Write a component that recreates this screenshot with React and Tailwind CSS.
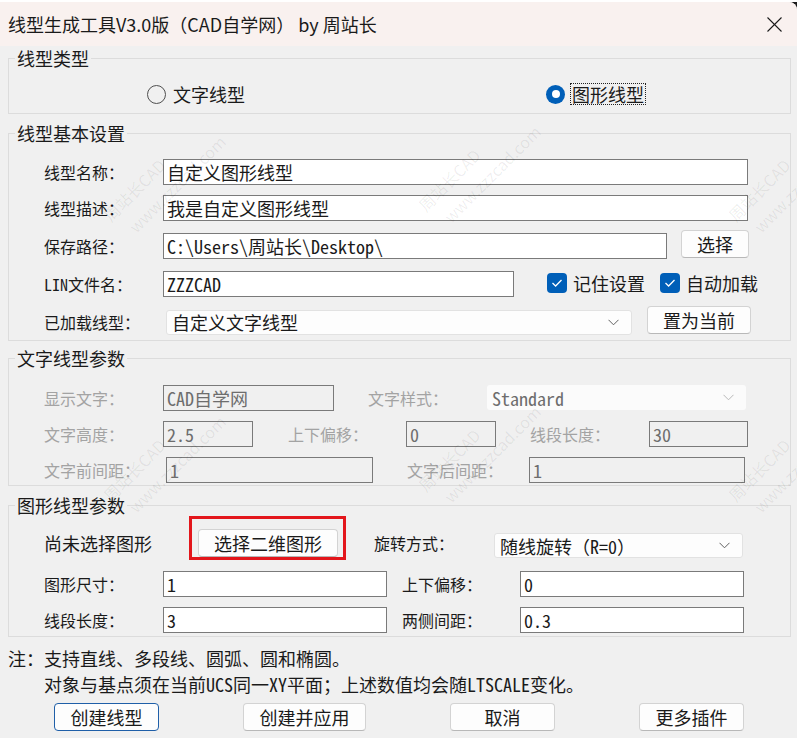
import React from 'react';

const ui = "font-['Noto_Sans_CJK_SC',sans-serif]";

// half-width Latin, like the dialog's bitmap font
function H({ children }) {
  return <span className="[font-feature-settings:'hwid']">{children}</span>;
}

function Group({ title, className = '', children }) {
  return (
    <fieldset className={`border border-[#dcdcdc] ${className}`}>
      <legend className="ml-[6px] px-[2px] text-[18px] leading-[22px] text-[#1a1a1a]">{title}</legend>
      {children}
    </fieldset>
  );
}

function Label({ children, w, className = '', disabled }) {
  return (
    <span className={`shrink-0 text-[16px] leading-[22px] whitespace-nowrap ${disabled ? 'text-[#a3a3a3]' : 'text-[#1a1a1a]'} ${w} ${className}`}>
      {children}
    </span>
  );
}

function Field({ value, w, disabled, className = '' }) {
  return (
    <input
      readOnly
      disabled={disabled}
      value={value}
      className={`h-[26px] shrink-0 border border-[#7a7a7a] pl-[3px] text-[18px] outline-none [font-feature-settings:'hwid'] ${disabled ? 'bg-[#f0f0f0] text-[#6d6d6d]' : 'bg-white text-[#1a1a1a]'} ${w} ${className}`}
    />
  );
}

function Chevron({ color = '#606060' }) {
  return (
    <svg width="11" height="7" viewBox="0 0 11 7" fill="none">
      <polyline points="0.5,0.8 5.5,5.8 10.5,0.8" stroke={color} strokeWidth="1" />
    </svg>
  );
}

function Combo({ children, w, disabled, className = '' }) {
  return (
    <div className={`flex h-[25px] shrink-0 items-center justify-between rounded-[3px] pl-[5px] pr-[12px] text-[18px] ${disabled ? 'bg-[#fbfbfb] text-[#6d6d6d]' : 'border border-[#e2e2e2] bg-[#fdfdfd] text-[#1a1a1a]'} ${w} ${className}`}>
      <span className="leading-[22px]">{children}</span>
      <Chevron color={disabled ? '#b8b8b8' : '#606060'} />
    </div>
  );
}

function Button({ children, w, focused, className = '' }) {
  return (
    <button
      className={`h-[28px] shrink-0 rounded-[4px] border bg-[#fdfdfd] text-[18px] leading-[22px] text-[#1a1a1a] ${focused ? 'border-[#1f5fa8]' : 'border-[#d3d3d3] border-b-[#b8b8b8]'} ${w} ${className}`}
    >
      {children}
    </button>
  );
}

function Check({ label, className = '' }) {
  return (
    <label className={`flex items-center ${className}`}>
      <span className="flex h-[20px] w-[20px] items-center justify-center rounded-[4px] bg-[#005fb8]">
        <svg width="12" height="10" viewBox="0 0 12 10" fill="none">
          <polyline points="1.5,5 4.6,8 10.5,2" stroke="white" strokeWidth="1.3" />
        </svg>
      </span>
      <span className="ml-[6px] text-[18px] leading-[22px] text-[#1a1a1a]">{label}</span>
    </label>
  );
}

function Radio({ label, checked }) {
  return (
    <label className="flex items-center">
      {checked ? (
        <span className="flex h-[19px] w-[19px] items-center justify-center rounded-full bg-[#005fb8]">
          <span className="h-[8px] w-[8px] rounded-full bg-white" />
        </span>
      ) : (
        <span className="h-[19px] w-[19px] rounded-full border border-[#4f4f4f]" />
      )}
      <span className={`ml-[5px] text-[18px] leading-[20px] text-[#1a1a1a] ${checked ? 'border border-dotted border-[#202020] px-[1px]' : 'px-[2px]'}`}>
        {label}
      </span>
    </label>
  );
}

// faint diagonal site marks across the dialog
const marks = [
  { left: 95, top: 150 },
  { left: 410, top: 140 },
  { left: 720, top: 150 },
  { left: 95, top: 430 },
  { left: 410, top: 420 },
  { left: 720, top: 430 },
];

function Watermarks() {
  return (
    <div className="pointer-events-none absolute inset-0 overflow-hidden">
      {marks.map((m, i) => (
        <div
          key={i}
          className="absolute flex -rotate-45 flex-col text-[16px] leading-[26px] text-[#000000]/[0.07]"
          style={{ left: m.left, top: m.top }}
        >
          <span className="whitespace-nowrap">周站长CAD</span>
          <span className="ml-[10px] whitespace-nowrap">www.zzzcad.com</span>
        </div>
      ))}
    </div>
  );
}

export default function App() {
  return (
    <div className={`h-[738px] w-[797px] bg-[#1c1c1c] ${ui}`}>
      <div className="relative mt-[2px] h-[736px] overflow-hidden rounded-tr-[8px] bg-[#f0f0f0]">
        {/* title bar */}
        <div className="flex h-[44px] items-center justify-between bg-[#f9f1ef] pl-[8px] pr-[15px]">
          <span className="text-[18px] leading-[24px] text-[#1a1a1a]">
            线型生成工具V3.0版（CAD自学网） by 周站长
          </span>
          <svg width="15" height="15" viewBox="0 0 15 15" fill="none">
            <line x1="0.5" y1="0.5" x2="14.5" y2="14.5" stroke="#1a1a1a" strokeWidth="1.1" />
            <line x1="14.5" y1="0.5" x2="0.5" y2="14.5" stroke="#1a1a1a" strokeWidth="1.1" />
          </svg>
        </div>

        <div className="pl-[8px] pr-[6px]">
          <Group title="线型类型" className="mt-[1px] h-[67px]">
            <div className="mt-[13px] flex h-[24px] items-center gap-[299px] pl-[138px]">
              <Radio label="文字线型" />
              <Radio label="图形线型" checked />
            </div>
          </Group>

          <Group title="线型基本设置" className="mt-[8px] h-[219px]">
            <div className="flex flex-col pl-[35px]">
              <div className="mt-[15px] flex h-[26px] items-center">
                <Label w="w-[119px]">线型名称：</Label>
                <Field value="自定义图形线型" w="w-[585px]" />
              </div>
              <div className="mt-[10px] flex h-[26px] items-center">
                <Label w="w-[119px]">线型描述：</Label>
                <Field value="我是自定义图形线型" w="w-[585px]" />
              </div>
              <div className="mt-[12px] flex h-[26px] items-center">
                <Label w="w-[119px]">保存路径：</Label>
                <Field value="C:\Users\周站长\Desktop\" w="w-[504px]" />
                <Button w="w-[68px]" className="mb-[5px] ml-[14px] h-[27px]">选择</Button>
              </div>
              <div className="mt-[12px] flex h-[26px] items-center">
                <Label w="w-[119px]"><H>LIN</H>文件名：</Label>
                <Field value="ZZZCAD" w="w-[351px]" />
                <Check label="记住设置" className="mb-[2px] ml-[33px]" />
                <Check label="自动加载" className="mb-[2px] ml-[15px]" />
              </div>
              <div className="mt-[12px] flex h-[26px] items-center">
                <Label w="w-[122px]">已加载线型：</Label>
                <Combo w="w-[466px]">自定义文字线型</Combo>
                <Button w="w-[104px]" className="mb-[4px] ml-[15px]">置为当前</Button>
              </div>
            </div>
          </Group>

          <Group title="文字线型参数" className="mt-[6px] h-[139px]">
            <div className="flex flex-col pl-[35px]">
              <div className="mt-[16px] flex h-[26px] items-center">
                <Label w="w-[119px]" disabled>显示文字：</Label>
                <Field value="CAD自学网" w="w-[171px]" disabled />
                <Label w="w-[119px]" className="ml-[34px]" disabled>文字样式：</Label>
                <Combo w="w-[259px]" disabled className="mb-[1px]"><H>Standard</H></Combo>
              </div>
              <div className="mt-[10px] flex h-[26px] items-center">
                <Label w="w-[119px]" disabled>文字高度：</Label>
                <Field value="2.5" w="w-[90px]" disabled />
                <Label w="w-[118px]" className="ml-[35px]" disabled>上下偏移：</Label>
                <Field value="0" w="w-[90px]" disabled />
                <Label w="w-[119px]" className="ml-[34px]" disabled>线段长度：</Label>
                <Field value="30" w="w-[99px]" disabled />
              </div>
              <div className="mt-[10px] flex h-[26px] items-center">
                <Label w="w-[122px]" disabled>文字前间距：</Label>
                <Field value="1" w="w-[207px]" disabled />
                <Label w="w-[122px]" className="ml-[34px]" disabled>文字后间距：</Label>
                <Field value="1" w="w-[216px]" disabled />
              </div>
            </div>
          </Group>

          <Group title="图形线型参数" className="mt-[8px] h-[143px]">
            <div className="flex flex-col pl-[35px]">
              <div className="flex h-[44px] items-start">
                <span className="mt-[16px] w-[145px] shrink-0 text-[18px] leading-[22px] text-[#1a1a1a]">尚未选择图形</span>
                <div className="h-[44px] w-[157px] shrink-0 border-[3px] border-[#e3161b] pl-[6px] pt-[10px]">
                  <Button w="w-[140px]" className="h-[26px]">选择二维图形</Button>
                </div>
                <Label w="w-[120px]" className="ml-[28px] mt-[16px]">旋转方式：</Label>
                <Combo w="w-[249px]" className="mt-[17px]">随线旋转（<H>R=0</H>）</Combo>
              </div>
              <div className="mt-[11px] flex h-[26px] items-center">
                <Label w="w-[119px]">图形尺寸：</Label>
                <Field value="1" w="w-[224px]" />
                <Label w="w-[118px]" className="ml-[15px]">上下偏移：</Label>
                <Field value="0" w="w-[224px]" />
              </div>
              <div className="mt-[10px] flex h-[26px] items-center">
                <Label w="w-[119px]">线段长度：</Label>
                <Field value="3" w="w-[224px]" />
                <Label w="w-[118px]" className="ml-[15px]">两侧间距：</Label>
                <Field value="0.3" w="w-[224px]" />
              </div>
            </div>
          </Group>

          <div className="mt-[8px] text-[18px] leading-[26px] text-[#1a1a1a]">
            <p>注：支持直线、多段线、圆弧、圆和椭圆。</p>
            <p className="pl-[36px]">
              对象与基点须在当前<H>UCS</H>同一<H>XY</H>平面；上述数值均会随<H>LTSCALE</H>变化。
            </p>
          </div>

          <div className="mt-[6px] flex gap-[84px] pl-[46px]">
            <Button w="w-[105px]" focused>创建线型</Button>
            <Button w="w-[123px]">创建并应用</Button>
            <Button w="w-[105px]">取消</Button>
            <Button w="w-[105px]">更多插件</Button>
          </div>
        </div>

        <Watermarks />
      </div>
    </div>
  );
}
